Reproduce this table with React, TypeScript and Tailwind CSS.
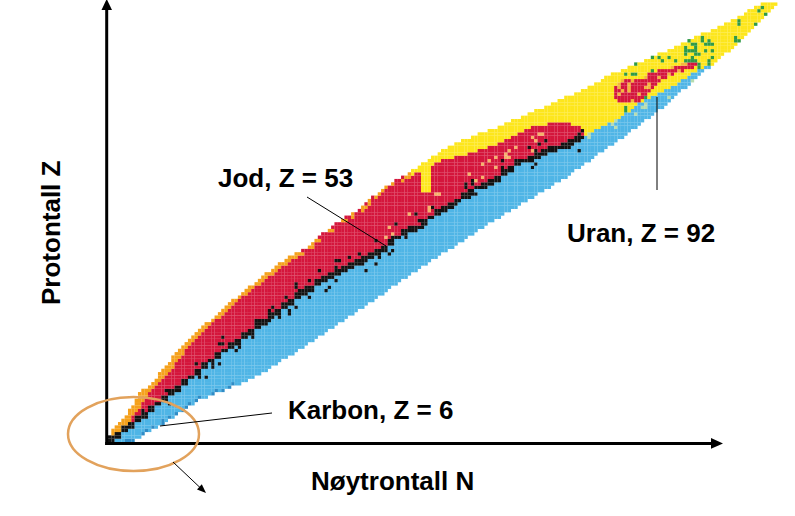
import React from 'react';

type P = [number, number][];

const interp = (pts: P, x: number): number => {
  if (x <= pts[0][0]) return pts[0][1];
  for (let k = 1; k < pts.length; k++) {
    const [x1, y1] = pts[k - 1];
    const [x2, y2] = pts[k];
    if (x <= x2) return y1 + ((y2 - y1) * (x - x1)) / (x2 - x1);
  }
  return pts[pts.length - 1][1];
};

const inPoly = (poly: P, x: number, y: number): boolean => {
  let inside = false;
  for (let a = 0, b = poly.length - 1; a < poly.length; b = a++) {
    const [xi, yi] = poly[a];
    const [xj, yj] = poly[b];
    if (yi > y !== yj > y && x < ((xj - xi) * (y - yi)) / (yj - yi) + xi) inside = !inside;
  }
  return inside;
};

const TOP: P = [
  [107, 443], [110, 433], [127, 413], [140, 393], [157, 377], [170, 360], [187, 340], [213, 318],
  [240, 294], [262, 277], [283, 261], [310, 245], [323, 233], [340, 221], [357, 210], [373, 197],
  [390, 184], [413, 170], [423, 163], [443, 150], [470, 137], [490, 130], [533, 112], [560, 99],
  [583, 90], [610, 75], [650, 58], [683, 43], [733, 20], [767, 0], [800, -12],
];
const RTOP: P = [
  [110, 443], [119, 433], [136, 413], [149, 393], [166, 377], [179, 360], [194, 340], [219, 318],
  [246, 294], [266, 279], [288, 263], [314, 247], [327, 236], [344, 224], [360, 213], [376, 200],
  [393, 187], [412, 176], [423, 168], [443, 160], [470, 153], [490, 147], [533, 127], [560, 121],
  [583, 128],
];
const STAB: P = [
  [108, 442], [113, 438], [133, 423], [153, 407], [173, 391], [200, 370], [213, 358], [247, 334],
  [287, 304], [320, 281], [350, 266], [363, 260], [377, 253], [390, 243], [403, 233], [417, 227],
  [430, 217], [447, 207], [463, 197], [477, 187], [490, 183], [517, 163], [550, 150], [584, 137],
];
const BTOP: P = [
  [583, 137], [600, 128], [617, 120], [640, 103], [667, 90], [683, 80], [693, 73], [717, 62],
  [750, 38], [773, 10], [800, -12],
];
const BOT: P = [
  [107, 443], [133, 441], [167, 422], [200, 400], [233, 387], [267, 370], [300, 350], [333, 328],
  [367, 305], [400, 282], [433, 260], [467, 238], [500, 217], [533, 197], [567, 177], [600, 153],
  [633, 130], [657, 112], [683, 90], [730, 50], [775, 5], [800, -15],
];
const RED_PATCH: P = [
  [612, 88], [622, 80], [640, 79], [650, 73], [665, 69], [680, 64], [695, 61], [697, 67], [683, 71],
  [668, 77], [656, 84], [648, 94], [640, 101], [628, 103], [615, 100],
];

const RED = '#d4163c';
const YEL = '#fde61c';
const BLUE = '#4fb5e6';
const ORG = '#f5a11c';
const BLK = '#121212';
const GRN = '#2f9a45';
const SAL = '#f7b26a';
const DBLUE = '#2f8cc6';
const PALE = '#b5dcb0';

const S = 3.33;
const X0 = 108;
const Y0 = 442;

const hash = (i: number, j: number) => {
  const v = Math.sin(i * 127.1 + j * 311.7) * 43758.5453;
  return v - Math.floor(v);
};

type Cell = { x: number; y: number; c: string };

function buildCells(): Cell[] {
  const cells: Cell[] = [];
  for (let i = 0; i < 210; i++) {
    const cx = X0 + (i + 0.5) * S;
    if (cx > 792) break;
    const cxq = X0 + (Math.floor(i / 2) * 2 + 1) * S;
    const t = interp(TOP, cx);
    const b = interp(BOT, cx);
    for (let j = 0; j < 136; j++) {
      const cy = Y0 - (j + 0.5) * S;
      if (cy < 1) break;
      if (cy < t || cy > b) continue;
      const r = hash(i, j);
      let c = BLUE;
      if (cx < 584) {
        const st = interp(STAB, cxq);
        const rt = interp(RTOP, cx);
        if (cy >= st - S * 0.75 && cy <= st + S * 1.0) c = BLK;
        else if (cy > st) {
          c = BLUE;
          if (cy - st < 13 && r < 0.1 && cx > 150) c = BLK;
          if (cx < 235 && b - cy < S * 1.2 && r < 0.55) c = DBLUE;
        } else {
          if (cy < rt) {
            c = cx < 300 ? ORG : cx < 412 ? (r < 0.5 ? ORG : RED) : YEL;
          } else {
            c = RED;
            if (st - cy < 14 && r < 0.12) c = BLK;
            else if (cx > 380 && cx < 560 && st - cy < 22 && r > 0.94) c = SAL;
          }
          if (cx > 422 && cx < 431 && cy > 165 && cy < 191) c = YEL;
        }
      } else {
        const bt = interp(BTOP, cx);
        if (cy > bt) {
          c = BLUE;
          if (cy - bt < 10 && r > 0.88) c = PALE;
        } else {
          c = YEL;
          if (inPoly(RED_PATCH, cx, cy)) c = r > 0.82 ? '#f4b63c' : RED;
          else if (
            cx > 625 &&
            (r < 0.08 || (cx > 683 && cx < 722 && cy > 40 && cy < 74 && r < 0.3))
          )
            c = GRN;
        }
      }
      cells.push({ x: X0 + i * S, y: Y0 - (j + 1) * S, c });
    }
  }
  return cells;
}

const CELLS = buildCells();

const FONT = "'Liberation Sans', Arial, Helvetica, sans-serif";

export default function App() {
  return (
    <div className="w-[795px] h-[516px] bg-white overflow-hidden">
      <svg width={795} height={516} viewBox="0 0 795 516" className="block">
        {CELLS.map((cell, k) => (
          <rect key={k} x={cell.x} y={cell.y} width={S + 0.08} height={S + 0.08} fill={cell.c} />
        ))}

        {/* axes */}
        <line x1={106.7} y1={8} x2={106.7} y2={445} stroke="#000" strokeWidth={3} />
        <polygon points="106.7,-1 101.5,10 112,10" fill="#000" />
        <line x1={105.2} y1={443.4} x2={713} y2={443.4} stroke="#000" strokeWidth={3} />
        <polygon points="723,443.4 711,438 711,448.8" fill="#000" />

        {/* ellipse and pointer */}
        <ellipse cx={133.5} cy={434} rx={65.5} ry={37} fill="none" stroke="#e2a25c" strokeWidth={2.5} />
        <line x1={173} y1={462} x2={200} y2={487.5} stroke="#000" strokeWidth={1} />
        <polygon points="206,493 197,489.4 201.8,484.2" fill="#000" />

        {/* label leader lines */}
        <line x1={307} y1={197} x2={386} y2={246} stroke="#000" strokeWidth={1} />
        <line x1={657} y1={97} x2={657} y2={190} stroke="#000" strokeWidth={1} />
        <line x1={160} y1={426} x2={272} y2={413} stroke="#000" strokeWidth={1} />

        {/* labels */}
        <text x={218} y={187} fontFamily={FONT} fontWeight="bold" fontSize={26} fill="#000">
          Jod, Z = 53
        </text>
        <text x={567} y={242} fontFamily={FONT} fontWeight="bold" fontSize={26} fill="#000">
          Uran, Z = 92
        </text>
        <text x={288} y={419} fontFamily={FONT} fontWeight="bold" fontSize={26} fill="#000">
          Karbon, Z = 6
        </text>
        <text x={311} y={490} fontFamily={FONT} fontWeight="bold" fontSize={26} fill="#000">
          Nøytrontall N
        </text>
        <text
          transform="translate(60 305) rotate(-90)"
          fontFamily={FONT}
          fontWeight="bold"
          fontSize={26}
          fill="#000"
        >
          Protontall Z
        </text>
      </svg>
    </div>
  );
}
